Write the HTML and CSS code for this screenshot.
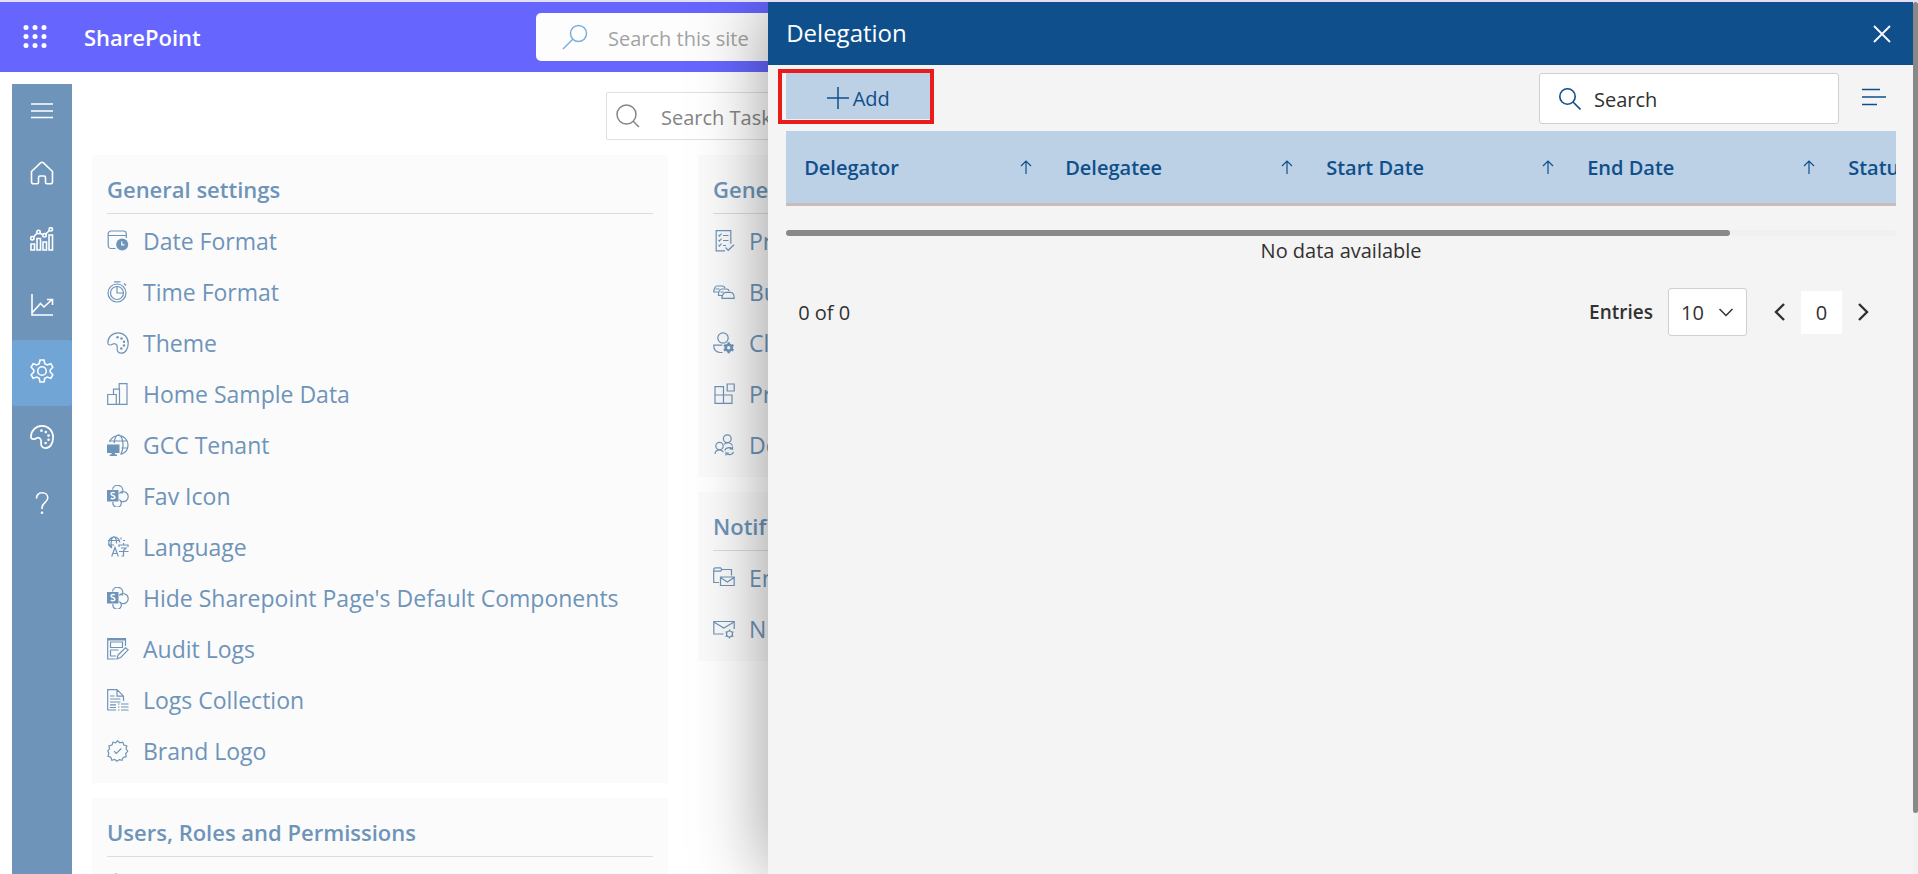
FILE: index.html
```html
<!DOCTYPE html>
<html lang="en">
<head>
<meta charset="utf-8">
<title>SharePoint - Delegation</title>
<link rel="stylesheet" href="styles.css">
</head>
<body>
<svg class="sprite" aria-hidden="true">
  <symbol id="i-date" viewBox="0 0 22 22"><path d="M8.5 18.5H4a2.8 2.8 0 0 1-2.800-2.800V3.800A2.800 2.800 0 0 1 4 1h12.500a2.800 2.800 0 0 1 2.800 2.800V8M1.200 5.500h18"/><circle cx="15.200" cy="14.500" r="6" fill="currentColor" stroke="none"/><path d="M14.800 11.500v3.300h2.700" stroke="#fff"/></symbol>
  <symbol id="i-time" viewBox="0 0 22 22"><circle cx="10" cy="12" r="9"/><circle cx="10" cy="12" r="6.500"/><path d="M10 5.500V12h6.500M7 .8h6.500M17 2.500l2 2"/></symbol>
  <symbol id="i-palette" viewBox="0 0 22 22"><path d="M.9 11.500C.5 5 5.500.8 11.200.8c5.500 0 10 4.500 10 10.400 0 5-2.500 10-6.700 10-3.500 0-4.700-2.500-4.300-5.200.3-2.200-.8-4.500-3.100-4.400-1.400 0-2.100 1.500-3.600 1.400C1.700 12.900 1 12.700.9 11.500z"/><g fill="currentColor" stroke="none"><circle cx="10.500" cy="5.200" r="1.200"/><circle cx="14.500" cy="6.500" r="1.200"/><circle cx="17" cy="9.700" r="1.200"/><circle cx="17" cy="13.500" r="1.200"/><circle cx="14.300" cy="16.500" r="1.200"/></g></symbol>
  <symbol id="i-bars" viewBox="0 0 22 22"><path d="M.7 11.500h8.600v9.800H.7zM6.500 11.500V6.200h6v15.100M12.200 6V.7h7.800v20.600H9.300"/></symbol>
  <symbol id="i-globe" viewBox="0 0 22 22"><path d="M2.500 8A9.500 9.500 0 0 1 21 10.500a10 10 0 0 1-6.500 9.700M2 7h18.500M14.500 14h6M7.300 9C7.500 4 9.500.8 11.500.8S16 5 16 10.500s-1 8-2.500 10"/><path d="M0 10.500h12.500v8.500H0zM4.500 19h3.500v1.500h2V22H2.700v-1.500h1.800z" fill="currentColor" stroke="none"/></symbol>
  <symbol id="i-share" viewBox="0 0 22 22"><path d="M5.500 4.500a5.200 5.200 0 0 1 10.300 1.300c0 1.200-.4 2-1 2.900M12.300 8.500a5 5 0 1 1-.2 6M6 17a4.200 4.200 0 1 0 7-2"/><path d="M0 5h11.500v11.500H0z" fill="currentColor" stroke="none"/><path d="M7.800 8c-1-.7-3.800-.8-3.800.9 0 1.800 3.900 1.500 3.900 3.300 0 1.700-2.800 1.800-4.100.9" stroke="#fff" stroke-width="1.500"/></symbol>
  <symbol id="i-lang" viewBox="0 0 22 22"><path d="M5 12A6 6 0 0 1 6.800.8a6 6 0 0 1 6 5.700M.8 4.500h12M1 9h6M4.700 12C3 5 5 1 6.800.8c2 0 3 4 2.700 6.700M14 1.500v2M16 4.500h2M4.700 20.500l3.300-9 3.300 9M5.800 17.500h4.400M12 11V9h9v2M16.500 7v2M14 12h5l-2.500 2.500V20h-2M12 15.500h9.500"/></symbol>
  <symbol id="i-audit" viewBox="0 0 22 22"><path d="M8.500 21H.7V.7h17.800V8M3.500 4h12v5.500h-12zM3.500 12h8M3.500 12v6h5.500M.7 1.800h17.500"/><path d="M11 17l7.500-7.200 2.700 2-7.500 7.700-3.700 1.300z"/></symbol>
  <symbol id="i-logs" viewBox="0 0 22 22"><path d="M9 21H.7V.7H10l6.500 6.500V12M10 .7v6.500h6.500M3 7h4.500M3 10h10.500M3 13h10.500M3 15.800h6M3 18.500h6M11 15h1.500M14 15h7.500M11 18h1.500M14 18h7.500M11 21h1.500M14 21h7.500"/></symbol>
  <symbol id="i-brand" viewBox="0 0 22 22"><path d="M10.500.8l2.300 2 3-.7 1 2.900 3 1-.7 3 1.600 2.300-2 2.200.5 3.200-3 .8-1.200 2.800-2.800-.7-2.200 1.600-2.200-1.700-3 .8-1-3-2.800-.9.800-3L.8 11l1.700-2.200L2 5.900l3-.9 1-2.900 2.700.7z"/><path d="M7 11.200l2.300 2.300 5-5"/></symbol>
  <symbol id="i-users" viewBox="0 0 22 22"><circle cx="9" cy="5" r="4"/><path d="M15 2l3 3"/></symbol>
  <symbol id="i-check" viewBox="0 0 22 22"><path d="M12 20.800H3.200V.7h14.600v13M5.500 5l1 1 2-2.500M5.500 10l1 1 2-2.500M5.500 15l1 1 2-2.500M10 5.500h5.500M10 10.500h5.500M10 15.500h3M12.500 17.500l2.700 2.800 5.800-5.500"/></symbol>
  <symbol id="i-units" viewBox="0 0 22 22"><path d="M5.500 11H.8C.8 7.500 2.500 5 4 5h5.500c1 0 2 1 2.500 2M9 14.500H5.500c0-4 1.300-6.500 3.500-6.500h4.500c1.300 0 2.200.7 2.700 2M9 17.300c0-3.800 2-6 3.800-6h4.700c2 0 3.700 2.200 3.700 6zM2.500 8h4M7.500 11h3"/></symbol>
  <symbol id="i-client" viewBox="0 0 22 22"><circle cx="10" cy="6" r="5.200"/><path d="M9.500 20.500H7c-4 0-6.500-3-6.200-7.300h8.500"/><circle cx="15.700" cy="15.700" r="3" stroke-width="2.600"/><path d="M15.700 10.200v2M15.700 19.200v2M11 13l1.700 1M18.700 17.400l1.700 1M11 18.400l1.700-1M18.700 14l1.700-1" stroke-width="2.400"/></symbol>
  <symbol id="i-blocks" viewBox="0 0 22 22"><path d="M2 3.700h8.500v16.600H2zM2 12h17v8.300h-8.500M14.200 1h7v7h-7z"/></symbol>
  <symbol id="i-people" viewBox="0 0 22 22"><circle cx="14.300" cy="4.700" r="3.900"/><circle cx="6.500" cy="12" r="3.700"/><path d="M2 20c.2-2.500 1.500-4.200 4.500-4.200 2 0 3.200 1 4 2.500M11 10.500c2-2.500 7-2.500 8.500 1M12 16.500c0-2.500 5-4 7.500-1.500V12.500M19.500 15h-3M20.500 18c-.7 3-5.500 3.500-7.500 1v2.500M13 19h3"/></symbol>
  <symbol id="i-folder" viewBox="0 0 22 22"><path d="M6 15.500H.7V2L2 .8h5.500L9 2.500l-1.500 1.700H.7M9 2.500h9.500v6M7.500 10h13.700v8.500H7.500zM7.500 10.500l6.800 4.500 6.800-4.500"/></symbol>
  <symbol id="i-mail" viewBox="0 0 22 22"><path d="M10.500 16H.8V3.500h20.400V11M.8 4l10 6 10.300-6"/><circle cx="16.500" cy="16" r="3"/><path d="M16.500 11.500V13M16.500 19v1.500M12.500 13.700l1.500.9M19 17.500l1.500.9M12.500 18.400l1.500-.9M19 14.600l1.500-.9"/></symbol>
  <symbol id="arrow-up" viewBox="0 0 12 14"><path d="M6 14V1M1 6l5-5 5 5" fill="none" stroke="currentColor" stroke-width="1.200"/></symbol>
</svg>

<header class="topbar">
  <button class="waffle" aria-label="App launcher"><svg width="24" height="24" viewBox="0 0 24 24" fill="currentColor"><circle cx="3" cy="2.500" r="2.500"/><circle cx="12" cy="2.500" r="2.500"/><circle cx="21" cy="2.500" r="2.500"/><circle cx="3" cy="11.500" r="2.500"/><circle cx="12" cy="11.500" r="2.500"/><circle cx="21" cy="11.500" r="2.500"/><circle cx="3" cy="20.500" r="2.500"/><circle cx="12" cy="20.500" r="2.500"/><circle cx="21" cy="20.500" r="2.500"/></svg></button>
  <a class="brand" href="#">SharePoint</a>
  <label class="site-search">
    <svg width="26" height="26" viewBox="0 0 26 26" fill="none" stroke="currentColor" stroke-width="1.500"><circle cx="16.500" cy="9.500" r="8"/><path d="M10.500 15.500L1 25"/></svg>
    <input type="search" placeholder="Search this site" aria-label="Search this site">
  </label>
</header>

<div class="shell">
  <nav class="rail" aria-label="Main">
    <button class="rail-menu" aria-label="Menu"><svg viewBox="0 0 24 24"><path d="M1 5h22M1 12h22M1 18.500h22"/></svg></button>
    <a href="#" aria-label="Home"><svg viewBox="0 0 24 24"><path d="M1.500 10.500L10.500 1.800q1.500-1.200 3 0l9 8.700v10.300q0 2-2 2h-3.800q-1.200 0-1.200-1.200v-5.100q0-1.500-1.500-1.500h-4q-1.500 0-1.500 1.500v5.100q0 1.200-1.200 1.200H3.500q-2 0-2-2z"/></svg></a>
    <a href="#" aria-label="Analytics"><svg viewBox="0 0 24 24"><path d="M1 17h3.500v6H1zM7 11.500h3.500V23H7zM13 15h3.500v8H13zM19 8h3.500v15H19zM3 10.500l5-5.500 6 3.500 6-5.500"/><g fill="#6e94b9"><circle cx="2.300" cy="11.200" r="1.700"/><circle cx="8.500" cy="5" r="1.700"/><circle cx="14.500" cy="8.300" r="1.700"/><circle cx="20.800" cy="2.300" r="1.700"/></g></svg></a>
    <a href="#" aria-label="Reports"><svg viewBox="0 0 24 24"><path d="M2 1v21h21M2 20l8.500-9.500 3.500 3.500 8-7.500M17 6.500h5.500V12"/></svg></a>
    <a href="#" class="active" aria-label="Settings"><svg viewBox="0 0 24 24"><circle cx="12" cy="12" r="4.300"/><path d="M10 1h4l.8 3.600 2.400 1.300 3.600-1.200 2 3.500L20.200 11v2l2.600 2.800-2 3.500-3.600-1.200-2.400 1.300L14 23h-4l-.8-3.600-2.400-1.300-3.600 1.200-2-3.500L3.800 13v-2L1.200 8.200l2-3.500 3.600 1.200 2.400-1.300z"/></svg></a>
    <a href="#" aria-label="Theme"><svg viewBox="0 0 22 22"><use href="#i-palette"/></svg></a>
    <a href="#" aria-label="Help"><svg viewBox="0 0 24 24"><path d="M6.500 7.500C6.500 4 8.700 1.800 12 1.800s5.800 2 5.800 5c0 4.700-5.800 5-5.800 9.700v1.500"/><circle cx="12" cy="21.700" r="1.300" fill="currentColor" stroke="none"/></svg></a>
  </nav>

  <main class="content">
    <label class="task-search">
      <svg width="24" height="24" viewBox="0 0 24 24" fill="none" stroke="currentColor" stroke-width="1.500"><circle cx="10.500" cy="10.500" r="9.500"/><path d="M17 17l6 6"/></svg>
      <input type="search" placeholder="Search Task" aria-label="Search Task">
    </label>
    <div class="columns">
      <div class="column">
        <section class="card">
          <h2>General settings</h2>
          <ul>
            <li><a href="#"><svg><use href="#i-date"/></svg>Date Format</a></li>
            <li><a href="#"><svg><use href="#i-time"/></svg>Time Format</a></li>
            <li><a href="#"><svg><use href="#i-palette"/></svg>Theme</a></li>
            <li><a href="#"><svg><use href="#i-bars"/></svg>Home Sample Data</a></li>
            <li><a href="#"><svg><use href="#i-globe"/></svg>GCC Tenant</a></li>
            <li><a href="#"><svg><use href="#i-share"/></svg>Fav Icon</a></li>
            <li><a href="#"><svg><use href="#i-lang"/></svg>Language</a></li>
            <li><a href="#"><svg><use href="#i-share"/></svg>Hide Sharepoint Page's Default Components</a></li>
            <li><a href="#"><svg><use href="#i-audit"/></svg>Audit Logs</a></li>
            <li><a href="#"><svg><use href="#i-logs"/></svg>Logs Collection</a></li>
            <li><a href="#"><svg><use href="#i-brand"/></svg>Brand Logo</a></li>
          </ul>
        </section>
        <section class="card">
          <h2>Users, Roles and Permissions</h2>
          <ul><li><a href="#" aria-label="Users"><svg><use href="#i-users"/></svg></a></li></ul>
        </section>
      </div>
      <div class="column">
        <section class="card">
          <h2>Gene</h2>
          <ul>
            <li><a href="#"><svg><use href="#i-check"/></svg>Pr</a></li>
            <li><a href="#"><svg><use href="#i-units"/></svg>Bu</a></li>
            <li><a href="#"><svg><use href="#i-client"/></svg>Cl</a></li>
            <li><a href="#"><svg><use href="#i-blocks"/></svg>Pr</a></li>
            <li><a href="#"><svg><use href="#i-people"/></svg>De</a></li>
          </ul>
        </section>
        <section class="card">
          <h2>Notif</h2>
          <ul>
            <li><a href="#"><svg><use href="#i-folder"/></svg>En</a></li>
            <li><a href="#"><svg><use href="#i-mail"/></svg>N</a></li>
          </ul>
        </section>
      </div>
    </div>
  </main>
</div>

<aside class="drawer" aria-label="Delegation">
  <div class="panel">
    <div class="panel-head">
      <h1>Delegation</h1>
      <button class="close" aria-label="Close"><svg width="18" height="18" viewBox="0 0 18 18" fill="none" stroke="currentColor" stroke-width="1.800"><path d="M1 1l16 16M17 1L1 17"/></svg></button>
    </div>
    <div class="panel-body">
      <div class="toolbar">
        <div class="add-wrap">
          <button class="add"><svg width="22" height="22" viewBox="0 0 22 22" fill="none" stroke="currentColor" stroke-width="1.500"><path d="M11 0v22M0 11h22"/></svg>Add</button>
          <span class="callout"></span>
        </div>
        <label class="search">
          <svg width="22" height="22" viewBox="0 0 22 22" fill="none" stroke="currentColor" stroke-width="1.600"><circle cx="8.500" cy="8.500" r="7.700"/><path d="M14 14l7.500 7.500"/></svg>
          <input type="search" placeholder="Search" aria-label="Search">
        </label>
        <button class="filter" aria-label="Filter"><svg width="24" height="18" viewBox="0 0 24 18" fill="none" stroke="currentColor" stroke-width="1.600"><path d="M0 1.500h18M0 9h24M0 16.500h15"/></svg></button>
      </div>
      <div class="table-view">
        <table>
          <thead><tr>
            <th><div>Delegator<svg><use href="#arrow-up"/></svg></div></th>
            <th><div>Delegatee<svg><use href="#arrow-up"/></svg></div></th>
            <th><div>Start Date<svg><use href="#arrow-up"/></svg></div></th>
            <th><div>End Date<svg><use href="#arrow-up"/></svg></div></th>
            <th><div>Status<svg><use href="#arrow-up"/></svg></div></th>
          </tr></thead>
        </table>
      </div>
      <div class="scroll-x"><span></span></div>
      <p class="empty">No data available</p>
      <div class="pager">
        <span class="count">0 of 0</span>
        <label for="entries">Entries</label>
        <div class="select"><select id="entries"><option>10</option><option>20</option></select>
          <svg width="14" height="9" viewBox="0 0 14 9" fill="none" stroke="currentColor" stroke-width="1.500"><path d="M.5 1L7 7.500 13.500 1"/></svg></div>
        <button class="step prev" aria-label="Previous"><svg width="11" height="18" viewBox="0 0 11 18" fill="none" stroke="currentColor" stroke-width="2.400"><path d="M10 1L2 9l8 8"/></svg></button>
        <span class="page">0</span>
        <button class="step next" aria-label="Next"><svg width="11" height="18" viewBox="0 0 11 18" fill="none" stroke="currentColor" stroke-width="2.400"><path d="M1 1l8 8-8 8"/></svg></button>
      </div>
    </div>
  </div>
  <div class="scroll-y"><span></span></div>
</aside>
</body>
</html>
```

FILE: styles.css
```css
* { box-sizing: border-box; }
body {
  margin: 0;
  height: 100vh;
  overflow: hidden;
  display: flex;
  flex-direction: column;
  background: #fff;
  color: #323130;
  font-family: "Segoe UI", "Open Sans", "Noto Sans", sans-serif;
  font-size: 20px;
}
button { border: 0; padding: 0; background: none; color: inherit; font: inherit; cursor: pointer; }
input { border: 0; outline: 0; padding: 2px 0 0; background: none; color: inherit; font: inherit; min-width: 0; flex: 1; }
input::placeholder { color: inherit; opacity: 1; }
a { color: inherit; text-decoration: none; }
h1, h2, p, ul { margin: 0; padding: 0; }
svg { flex: none; display: block; }
.sprite { position: absolute; width: 0; height: 0; }

.topbar {
  flex: none;
  height: 72px;
  display: flex;
  align-items: center;
  border-top: 2px solid #e4dff4;
  background: #6666ff;
  color: #fff;
}
.waffle { width: 72px; padding-right: 2px; display: flex; justify-content: center; }
.brand { margin-left: 12px; width: 452px; font-size: 22px; font-weight: 600; }
.site-search {
  display: flex;
  align-items: center;
  gap: 20px;
  width: 700px;
  height: 48px;
  padding-left: 26px;
  border-radius: 5px;
  background: #fdfdfd;
  color: #a3a3a3;
}
.site-search svg { color: #79aede; }

.shell { flex: 1; min-height: 0; display: flex; gap: 20px; padding: 12px 38px 0 12px; }
.rail { flex: none; width: 60px; background: #6e94b9; color: #fff; }
.rail a, .rail button { display: flex; align-items: center; justify-content: center; width: 100%; height: 66px; padding-bottom: 4px; }
.rail .rail-menu { height: 58px; }
.rail .active { background: #70a5d6; border-radius: 3px; }
.rail svg { width: 24px; height: 24px; fill: none; stroke: currentColor; stroke-width: 1.6; }

.content { flex: 1; min-width: 0; padding-top: 8px; }
.task-search {
  display: flex;
  align-items: center;
  gap: 21px;
  width: 700px;
  height: 48px;
  margin: 0 auto 15px 514px;
  padding-left: 9px;
  border: 1px solid #e0e0e0;
  border-radius: 2px;
  color: #858585;
}
.columns { display: grid; grid-template-columns: repeat(3, 1fr); gap: 30px; align-items: start; }
.column { display: flex; flex-direction: column; gap: 15px; }
.card { padding: 0 15px 8px; background: #fbfbfb; color: #6e94b9; }
.card h2 { height: 59px; padding-top: 18px; border-bottom: 1px solid #dcdcdc; font-size: 22px; line-height: 32px; font-weight: 600; }
.card ul { list-style: none; }
.card li a { display: flex; align-items: center; gap: 14px; height: 51px; padding-top: 2px; font-size: 23px; }
.card li svg { width: 22px; height: 22px; fill: none; stroke: currentColor; stroke-width: 1.2; }

.drawer { position: fixed; top: 2px; bottom: 0; left: calc(40% + 1px); right: 0; display: flex; box-shadow: 0 0 70px rgba(0, 0, 0, .4); clip-path: inset(0 0 0 -120px); }
.panel { flex: 1; min-width: 0; background: #f4f4f4; }
.panel-head { display: flex; align-items: center; justify-content: space-between; height: 63px; padding: 0 22px 0 18px; background: #0f4f8b; color: #fff; }
.panel-head h1 { font-size: 24px; line-height: 32px; padding-bottom: 2px; font-weight: 400; }
.panel-body { padding: 8px 17px 0 18px; }
.toolbar { display: flex; height: 51px; margin-bottom: 7px; }
.add-wrap { position: relative; height: 46px; margin-right: auto; }
.add { display: flex; align-items: center; justify-content: center; gap: 4px; width: 144px; height: 46px; padding-top: 4px; background: #bcd1e5; color: #0f4f8b; }
.callout { position: absolute; inset: -4px -4px -5px -8px; border: 4px solid #ea1b1b; pointer-events: none; }
.search { display: flex; align-items: center; gap: 13px; width: 300px; padding-left: 19px; border: 1px solid #cfcfcf; border-radius: 3px; background: #fff; }
.search svg, .filter, th { color: #0f4f8b; }
.filter { width: 57px; display: flex; align-items: center; justify-content: flex-end; padding: 0 10px 3px 0; }

.table-view { overflow: hidden; }
table { table-layout: fixed; width: 1305px; border-collapse: separate; border-spacing: 0; }
th { padding: 0 15px 0 18px; height: 75px; border-bottom: 3px solid #c8bcbc; background: #bcd1e5; font-weight: 600; text-align: left; }
th div { display: flex; align-items: center; justify-content: space-between; }
th svg { width: 12px; height: 14px; }
.scroll-x { height: 6px; margin-top: 24px; border-radius: 3px; background: #f0f0f0; }
.scroll-x span { display: block; width: 85%; height: 6px; border-radius: 3px; background: #888; }
.empty { line-height: 30px; text-align: center; }

.pager { display: flex; align-items: center; height: 48px; margin-top: 22px; padding: 0 27px 0 12px; }
.count { margin-right: auto; }
.pager label { font-size: 19px; font-weight: 600; }
.select { position: relative; margin: 0 27px 0 15px; }
.select select { display: block; appearance: none; width: 79px; height: 48px; padding: 0 14px 0 12px; border: 1px solid #cfcfcf; border-radius: 3px; background: #fff; color: inherit; font: inherit; }
.select svg { position: absolute; right: 14px; top: 20px; pointer-events: none; }
.page { margin: 0 16px; width: 41px; height: 43px; line-height: 43px; background: #fff; text-align: center; }

.scroll-y { width: 5px; background: #f1f1f1; }
.scroll-y span { display: block; height: 93%; border-radius: 3px; background: #888; }
```
